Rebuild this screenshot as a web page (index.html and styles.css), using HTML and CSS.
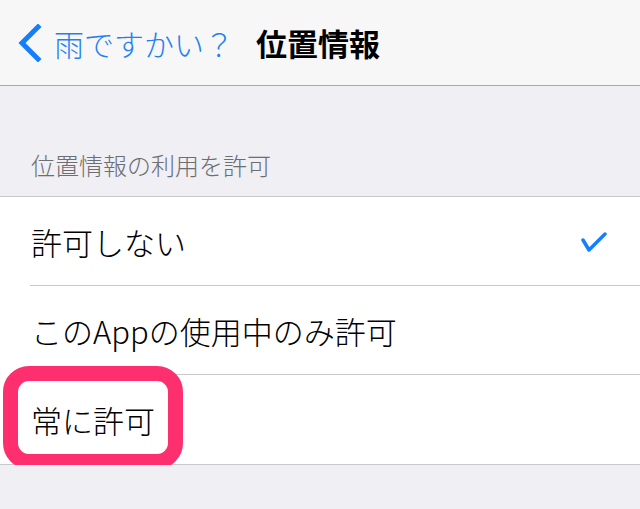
FILE: index.html
```
<!DOCTYPE html>
<html lang="ja">
<head>
    <meta charset="UTF-8">
    <meta name="viewport" content="width=device-width, initial-scale=1.0">
    <title>位置情報</title>
    <link rel="stylesheet" href="styles.css">
</head>
<body>
    <div class="navbar">
        <a href="" class="back">
            <svg class="chevron" width="26" height="38" viewBox="0 0 26 38">
                <polyline points="22,3 6,19 22,35" fill="none" stroke="#157efb" stroke-width="5" stroke-linecap="square"/>
            </svg>
            <span>雨ですかい？</span>
        </a>
        <div class="title">位置情報</div>
    </div>

    <div class="section-header">位置情報の利用を許可</div>

    <div class="list">
        <div class="row">
            <span>許可しない</span>
            <svg class="check" width="26" height="22" viewBox="0 0 26 22">
                <polyline points="2,9 8,19 24,3" fill="none" stroke="#157efb" stroke-width="3.5" stroke-linecap="round" stroke-linejoin="round"/>
            </svg>
        </div>
        <div class="row">
            <span>このAppの使用中のみ許可</span>
        </div>
        <div class="row last">
            <span>常に許可</span>
            <div class="highlight"></div>
        </div>
    </div>
</body>
</html>
```

FILE: styles.css
```
body {
    margin: 0;
    background-color: #efeff4;
    font-family: "Noto Sans CJK JP", "Noto Sans", sans-serif;
    color: #000;
}

a {
    text-decoration: none;
}

.navbar {
    height: 85px;
    background-color: #f7f7f8;
    border-bottom: 1px solid #a7a7ab;
    display: flex;
    align-items: center;
}

.back {
    display: flex;
    align-items: center;
    color: #1f80f2;
    font-size: 30px;
    font-weight: 300;
    margin-left: 16px;
}

.chevron {
    margin-right: 12px;
}

.title {
    font-size: 31px;
    font-weight: bold;
    margin-left: 22px;
}

.section-header {
    height: 110px;
    box-sizing: border-box;
    display: flex;
    align-items: flex-end;
    padding-left: 31px;
    padding-bottom: 14px;
    font-size: 24px;
    font-weight: 300;
    color: #6d6d72;
}

.list {
    background-color: #fff;
    border-top: 1px solid #c8c7cc;
    border-bottom: 1px solid #c8c7cc;
}

.row {
    position: relative;
    height: 89px;
    display: flex;
    align-items: center;
    justify-content: space-between;
    padding-left: 31px;
    padding-right: 33px;
    font-size: 31px;
    font-weight: 300;
}

.row::after {
    content: "";
    position: absolute;
    left: 30px;
    right: 0;
    bottom: 0;
    height: 1px;
    background-color: #c8c7cc;
}

.row.last::after {
    display: none;
}

.highlight {
    position: absolute;
    left: 3px;
    top: -9px;
    width: 180px;
    height: 103px;
    box-sizing: border-box;
    border: 15px solid #fd2f6e;
    border-radius: 26px;
}
```
